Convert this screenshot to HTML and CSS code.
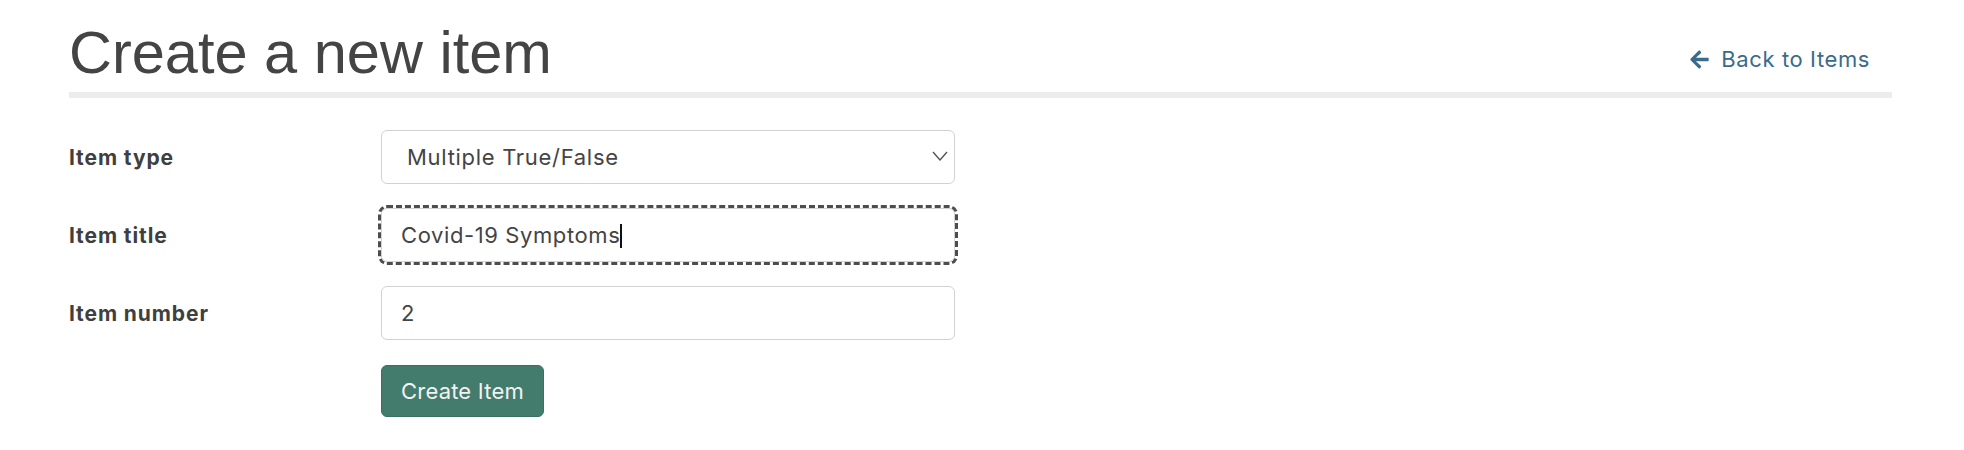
FILE: index.html
```html
<!DOCTYPE html>
<html lang="en">
<head>
<meta charset="utf-8">
<title>Create a new item</title>
<link rel="stylesheet" href="styles.css">
</head>
<body>
<div class="container">
  <header class="page-header">
    <h1 class="page-title">Create a new item</h1>
    <a class="back-link" href="#">
      <svg class="back-icon" viewBox="0 0 448 512" aria-hidden="true"><path d="M257.5 445.1l-22.2 22.2c-9.4 9.4-24.6 9.4-33.9 0L7 273c-9.4-9.4-9.4-24.6 0-33.9L201.4 44.7c9.4-9.4 24.6-9.4 33.9 0l22.2 22.2c9.5 9.5 9.3 25-.4 34.3L136.6 216H424c13.3 0 24 10.7 24 24v32c0 13.3-10.7 24-24 24H136.6l120.5 114.8c9.8 9.3 10 24.8.4 34.3z"/></svg>
      <span>Back to Items</span>
    </a>
  </header>
  <form class="item-form">
    <label class="form-label" for="type">Item type</label>
    <div class="field-wrap">
      <select id="type" class="form-control form-select">
        <option>Multiple True/False</option>
      </select>
      <svg class="chevron" viewBox="0 0 16 10" aria-hidden="true"><path d="M1 1l7 8 7-8"/></svg>
    </div>
    <label class="form-label" for="title">Item title</label>
    <div class="field-wrap">
      <input id="title" class="form-control is-focused" type="text" value="Covid-19 Symptoms">
      <span class="fake-caret" aria-hidden="true">Covid-19 Symptoms</span>
    </div>
    <label class="form-label" for="number">Item number</label>
    <input id="number" class="form-control" type="text" value="2">
    <div class="spacer"></div>
    <div><button type="button" class="btn-create">Create Item</button></div>
  </form>
</div>
</body>
</html>
```
FILE: styles.css
```css
html, body {
  margin: 0;
  padding: 0;
  background: #ffffff;
}
body {
  font-family: "Inter", "Lato", "Liberation Sans", sans-serif;
  color: #444444;
}
.container {
  padding: 0 72px 0 69px;
}
.page-header {
  display: flex;
  justify-content: space-between;
  align-items: flex-end;
  border-bottom: 6px solid #ececec;
  padding-top: 21px;
  padding-bottom: 7px;
}
.page-title {
  margin: 0;
  font-family: "Liberation Sans", Arial, sans-serif;
  font-weight: 400;
  font-size: 59.5px;
  line-height: 64px;
  color: #444444;
}
.back-link {
  display: flex;
  align-items: center;
  gap: 12px;
  margin-right: 22px;
  margin-bottom: 11px;
  color: #3b6b8b;
  text-decoration: none;
  font-size: 22px;
  letter-spacing: 0.6px;
  line-height: 30px;
}
.back-icon {
  width: 19px;
  height: 21px;
  fill: #3b6b8b;
}
.item-form {
  display: grid;
  grid-template-columns: 312px 574px;
  grid-auto-rows: 54px;
  row-gap: 24px;
  align-items: center;
  margin-top: 32px;
}
.form-label {
  font-weight: 700;
  font-size: 21px;
  letter-spacing: 0.9px;
  color: #3f3f3f;
}
.field-wrap {
  position: relative;
  height: 54px;
}
.form-control {
  box-sizing: border-box;
  width: 574px;
  height: 54px;
  margin: 0;
  padding: 0 19px;
  border: 1px solid #d2d2d2;
  border-radius: 6px;
  background: #ffffff;
  font-family: "Inter", "Lato", "Liberation Sans", sans-serif;
  font-size: 22px;
  letter-spacing: 0.6px;
  color: #444444;
}
.form-select {
  -webkit-appearance: none;
  appearance: none;
  padding-left: 25px;
  letter-spacing: 0.7px;
}
.chevron {
  position: absolute;
  left: 551px;
  top: 21px;
  width: 16px;
  height: 10px;
  fill: none;
  stroke: #555555;
  stroke-width: 1.4;
  pointer-events: none;
}
.fake-caret {
  position: absolute;
  left: 20px;
  top: 16px;
  height: 24px;
  font-size: 22px;
  letter-spacing: 0.6px;
  line-height: 24px;
  color: transparent;
  border-right: 2px solid #111111;
  pointer-events: none;
}
.is-focused {
  outline: 3px dashed #4d4d4d;
  outline-offset: 0;
}
.btn-create {
  box-sizing: border-box;
  height: 52px;
  padding: 0 19px;
  border: 1px solid #3b6f62;
  border-radius: 6px;
  background: #437b6d;
  color: #f2f2f2;
  font-family: "Inter", "Lato", "Liberation Sans", sans-serif;
  font-size: 22px;
  letter-spacing: 0.2px;
  cursor: pointer;
}
```
